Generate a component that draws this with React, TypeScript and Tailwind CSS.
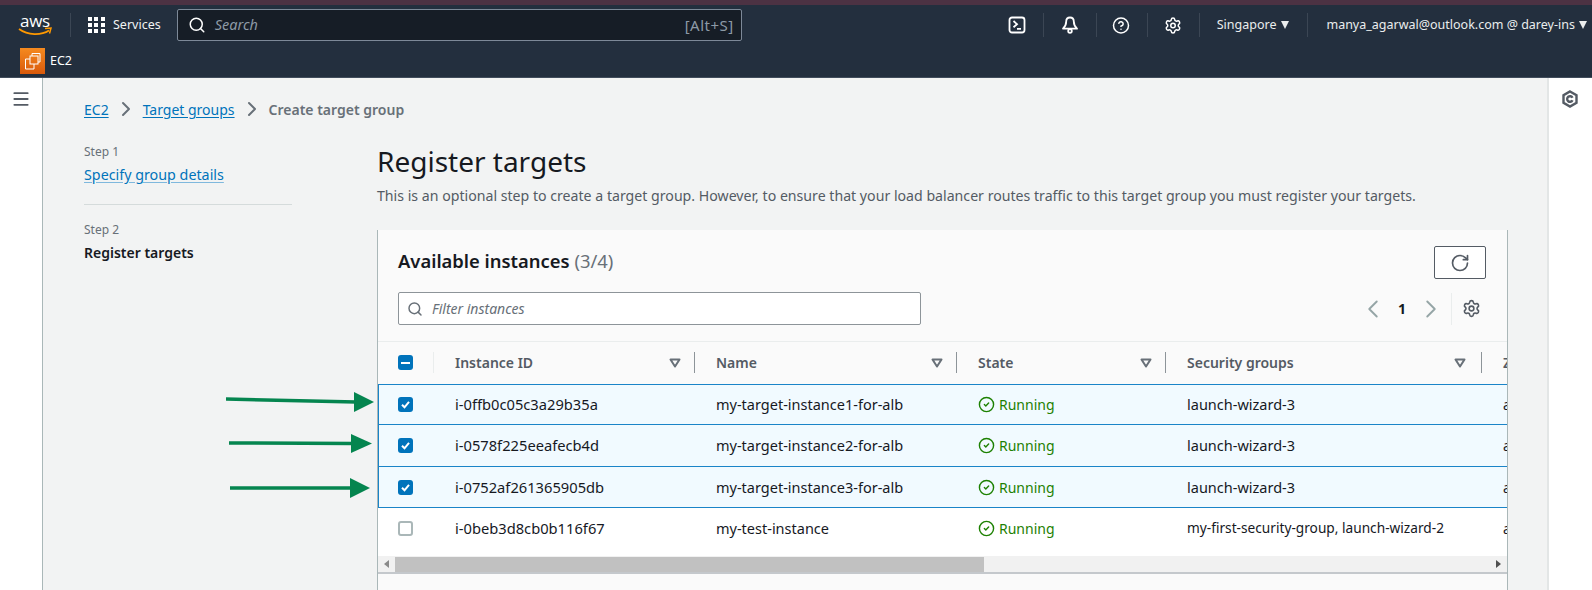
import React from 'react';
import { ChevronLeft, ChevronRight, RotateCw, Search, Settings, CircleHelp, Menu, CircleCheck } from 'lucide-react';

const rows = [
    { id: 'i-0ffb0c05c3a29b35a', name: 'my-target-instance1-for-alb', groups: 'launch-wizard-3', selected: true, h: 'h-[40px]' },
    { id: 'i-0578f225eeafecb4d', name: 'my-target-instance2-for-alb', groups: 'launch-wizard-3', selected: true, h: 'h-[42px]' },
    { id: 'i-0752af261365905db', name: 'my-target-instance3-for-alb', groups: 'launch-wizard-3', selected: true, h: 'h-[41px] pt-[1px]' },
    { id: 'i-0beb3d8cb0b116f67', name: 'my-test-instance', groups: 'my-first-security-group, launch-wizard-2', selected: false, h: 'h-[49px] pb-[7px]' },
];

const columnGrid = 'grid grid-cols-[56px_261px_262px_209px_316px_100px] w-[1204px]';

const NavDivider = () => <div className="w-px h-[24px] bg-[#3b4654]" />;

const NavCaret = () => (
    <div className="w-0 h-0 border-x-[4.500px] border-x-transparent border-t-[8px] border-t-[#eaeded]" />
);

const Triangle = () => (
    <svg width="12" height="10" viewBox="0 0 12 10" className="shrink-0">
        <path d="M1.500 1.500h9L6 8.500z" fill="none" stroke="#687078" strokeWidth="2" strokeLinejoin="round" />
    </svg>
);

const HeaderCell = ({ label, tight }: { label: string; tight?: boolean }) => (
    <div className={`flex items-center h-[21px] pl-[21px] border-r border-[#8d9499] justify-between ${tight ? 'pr-[13px]' : 'pr-[15px]'}`}>
        <span className="text-[14px] font-semibold text-[#545b64]">{label}</span>
        <Triangle />
    </div>
);

const Checkbox = ({ state }: { state: 'on' | 'off' | 'mixed' }) => {
    if (state === 'off') {
        return <div className="w-[15px] h-[15px] rounded-[3px] bg-white border-2 border-[#aab7b8]" />;
    }
    return (
        <div className="w-[15px] h-[15px] rounded-[3px] bg-[#0073bb] flex items-center justify-center">
            {state === 'on' ? (
                <svg width="11" height="11" viewBox="0 0 11 11">
                    <path d="M2 5.800 4.500 8.300 9 2.800" fill="none" stroke="white" strokeWidth="2" />
                </svg>
            ) : (
                <div className="w-[9px] h-[2px] bg-white" />
            )}
        </div>
    );
};

const Arrow = ({ className, shaft, head }: { className: string; shaft: string; head: string }) => (
    <svg width="150" height="24" viewBox="0 0 150 24" className={`absolute ${className}`}>
        <path d={shaft} stroke="#05854f" strokeWidth="3.500" fill="none" />
        <path d={head} fill="#05854f" />
    </svg>
);

const TerminalIcon = () => (
    <svg width="18" height="18" viewBox="0 0 18 18" fill="none" stroke="white" strokeWidth="1.800">
        <rect x="1.500" y="1.500" width="15" height="15" rx="2.500" />
        <path d="M5.500 5 9 8.200 5.500 11.200M9 12.800H13" />
    </svg>
);

const BellIcon = () => (
    <svg width="18" height="18" viewBox="0 0 18 18" fill="none" stroke="white" strokeWidth="1.800" strokeLinejoin="round">
        <path d="M9 1.500c-2.500 0-3.800 1.800-3.800 4 0 3-1 5-3.200 7.200h14c-2.200-2.200-3.200-4.200-3.200-7.200 0-2.200-1.300-4-3.800-4z" />
        <circle cx="9" cy="15" r="1.800" />
    </svg>
);

const AwsLogo = () => (
    <div className="flex flex-col items-center w-[34px] h-[24px] relative">
        <span className="text-[17px] leading-[15px] text-white font-['Open_Sans',sans-serif] tracking-[-0.3px]">aws</span>
        <svg width="34" height="11" viewBox="0 0 34 11" className="absolute left-0 top-[14px]">
            <path d="M1 2c9 6.500 22 6.500 30 1.500" fill="none" stroke="#ff9900" strokeWidth="1.800" />
            <path d="M27 1.500 33 1 31.500 6.500" fill="none" stroke="#ff9900" strokeWidth="1.500" />
        </svg>
    </div>
);

const Ec2Icon = () => (
    <div className="w-[25px] h-[26px] bg-gradient-to-b from-[#f58a1f] to-[#d9590b] flex items-center justify-center">
        <svg width="19" height="19" viewBox="0 0 19 19" fill="none" stroke="white" strokeWidth="1">
            <rect x="7" y="4" width="8" height="8" />
            <path d="M9 4V1.500H17V10H15M7 7H2.500V17H11V12" />
        </svg>
    </div>
);

export default function App() {
    return (
        <div className="w-[1592px] h-[590px] overflow-hidden relative bg-[#f2f3f3] font-['Noto_Sans',sans-serif] flex flex-col">
            <div className="h-[5px] bg-[#4c3243]" />

            {/* Top nav */}
            <div className="h-[40px] bg-[#232f3e] flex items-center pl-[18px] text-white">
                <AwsLogo />
                <div className="ml-[18px]"><NavDivider /></div>
                <div className="ml-[17px] grid grid-cols-3 gap-[2px] w-[17px]">
                    {[...Array(9)].map((_, i) => <div key={i} className="w-[4px] h-[4px] bg-white" />)}
                </div>
                <span className="ml-[8px] text-[12.500px] text-[#f2f3f3]">Services</span>
                <div className="ml-[16px] w-[565px] h-[32px] bg-[#161d26] border border-[#7d8998] rounded-[2px] flex items-center pl-[10px] pr-[7px]">
                    <Search size={18} strokeWidth={2} className="text-white" />
                    <span className="ml-[9px] text-[14.500px] italic text-[#8d9aa6]">Search</span>
                    <span className="ml-auto text-[15px] tracking-[0.5px] text-[#8d9aa6]">[Alt+S]</span>
                </div>
                <div className="ml-[266px] w-[18px] flex justify-center"><TerminalIcon /></div>
                <div className="ml-[17px]"><NavDivider /></div>
                <div className="ml-[17px] w-[18px] flex justify-center"><BellIcon /></div>
                <div className="ml-[17px]"><NavDivider /></div>
                <div className="ml-[15px] w-[18px] flex justify-center"><CircleHelp size={19} strokeWidth={2} /></div>
                <div className="ml-[17px]"><NavDivider /></div>
                <div className="ml-[16px] w-[18px] flex justify-center"><Settings size={19} strokeWidth={2} /></div>
                <div className="ml-[17px]"><NavDivider /></div>
                <span className="ml-[17px] text-[12.500px] text-[#eaeded]">Singapore</span>
                <div className="ml-[5px]"><NavCaret /></div>
                <div className="ml-[18px]"><NavDivider /></div>
                <span className="ml-[18px] text-[12.500px] text-[#eaeded] whitespace-nowrap">manya_agarwal@outlook.com @ darey-ins</span>
                <div className="ml-[4px]"><NavCaret /></div>
            </div>

            {/* Service bar */}
            <div className="h-[33px] bg-[#232f3e] border-b border-[#414d5c] flex items-center pl-[20px] text-white">
                <Ec2Icon />
                <span className="ml-[5px] text-[12.500px]">EC2</span>
            </div>

            <div className="flex-1 flex min-h-0">
                {/* Left rail */}
                <div className="w-[43px] bg-white border-r border-[#aab7b8] flex justify-center pt-[11px] shrink-0">
                    <Menu size={20} strokeWidth={2.200} className="text-[#545b64]" />
                </div>

                <div className="flex-1 min-w-0 pl-[41px] pt-[21px]">
                    {/* Breadcrumb */}
                    <div className="flex items-center text-[14px] h-[20px] whitespace-nowrap">
                        <a className="text-[#0073bb] underline underline-offset-2">EC2</a>
                        <ChevronRight size={24} strokeWidth={2} className="mx-[5px] text-[#687078]" />
                        <a className="text-[#0073bb] underline underline-offset-2">Target groups</a>
                        <ChevronRight size={24} strokeWidth={2} className="mx-[5px] text-[#687078]" />
                        <span className="font-semibold text-[#687078]">Create target group</span>
                    </div>

                    <div className="flex mt-[12px]">
                        {/* Steps */}
                        <div className="w-[208px] shrink-0 pt-[12px]">
                            <div className="text-[12px] leading-[18px] text-[#687078]">Step 1</div>
                            <a className="block mt-[4px] text-[14.300px] leading-[20px] text-[#0073bb] underline underline-offset-2 decoration-[#7fb8dd]">Specify group details</a>
                            <div className="mt-[19px] h-px bg-[#d5dbdb]" />
                            <div className="mt-[16px] text-[12px] leading-[18px] text-[#687078]">Step 2</div>
                            <div className="mt-[4px] text-[14px] leading-[20px] font-semibold text-[#16191f]">Register targets</div>
                        </div>

                        {/* Main */}
                        <div className="ml-[85px] w-[1131px] shrink-0">
                            <h1 className="text-[28px] leading-[36px] text-[#16191f] mt-[12px]">Register targets</h1>
                            <p className="mt-[7px] text-[14.150px] leading-[20px] text-[#545b64] whitespace-nowrap">This is an optional step to create a target group. However, to ensure that your load balancer routes traffic to this target group you must register your targets.</p>

                            <div className="mt-[24px] bg-[#fafafa] border-l border-r border-[#aab7b8] relative h-[400px] overflow-hidden">
                                <div className="h-[112px] border-b border-[#eaeded] relative pl-[20px] pr-[21px]">
                                    <div className="flex items-start justify-between pt-[16px]">
                                        <div className="text-[18.400px] leading-[30px] font-semibold text-[#16191f]">
                                            Available instances <span className="font-normal text-[#687078]">(3/4)</span>
                                        </div>
                                        <div className="w-[52px] h-[33px] bg-white border border-[#545b64] rounded-[2px] flex items-center justify-center">
                                            <RotateCw size={20} strokeWidth={2} className="text-[#545b64]" />
                                        </div>
                                    </div>
                                    <div className="flex items-center justify-between mt-[13px]">
                                        <div className="w-[523px] h-[33px] bg-white border border-[#8d9499] rounded-[2px] flex items-center pl-[8px]">
                                            <Search size={16} strokeWidth={2.200} className="text-[#687078]" />
                                            <span className="ml-[9px] text-[14px] italic text-[#687078]">Filter instances</span>
                                        </div>
                                        <div className="flex items-center mr-[5px]">
                                            <ChevronLeft size={30} strokeWidth={1.500} className="text-[#95a5a6]" />
                                            <span className="mx-[10px] text-[14px] font-bold text-[#16191f]">1</span>
                                            <ChevronRight size={30} strokeWidth={1.500} className="text-[#95a5a6]" />
                                            <div className="w-px h-[32px] bg-[#eaeded] ml-[5px] mr-[10px]" />
                                            <Settings size={19} strokeWidth={2} className="text-[#545b64]" />
                                        </div>
                                    </div>
                                </div>

                                {/* Table */}
                                <div className="overflow-hidden">
                                    <div className={`${columnGrid} h-[42px] items-start pt-[10px]`}>
                                        <div className="h-[21px] border-r border-[#eaeded] pl-[20px] flex items-center"><Checkbox state="mixed" /></div>
                                        <HeaderCell label="Instance ID" tight />
                                        <HeaderCell label="Name" tight />
                                        <HeaderCell label="State" tight />
                                        <HeaderCell label="Security groups" />
                                        <div className="pl-[21px] text-[14px] font-semibold text-[#545b64] whitespace-nowrap">Zone</div>
                                    </div>
                                    {rows.map((row) => (
                                        <div key={row.id} className={`${columnGrid} ${row.h} items-center text-[#16191f] border-t border-[#1a84c8] ${row.selected ? 'bg-[#f1faff] shadow-[inset_1px_0_0_#1a84c8]' : 'bg-white'}`}>
                                            <div className="pl-[20px] flex items-center"><Checkbox state={row.selected ? 'on' : 'off'} /></div>
                                            <div className="pl-[21px] text-[14.700px]">{row.id}</div>
                                            <div className="pl-[21px] text-[14.500px]">{row.name}</div>
                                            <div className="pl-[21px] flex items-center gap-[4px] text-[14px] text-[#1d8102]">
                                                <CircleCheck size={17} strokeWidth={2} />
                                                <span>Running</span>
                                            </div>
                                            <div className={`pl-[21px] whitespace-nowrap ${row.selected ? 'text-[14.500px]' : 'text-[13.700px]'}`}>{row.groups}</div>
                                            <div className="pl-[21px] text-[14px] whitespace-nowrap">ap-southeast-1</div>
                                        </div>
                                    ))}
                                </div>

                                {/* Scrollbar */}
                                <div className="h-[18px] bg-[#f1f1f1] border-b-2 border-[#c4c8cc] flex items-center">
                                    <div className="w-[17px] flex justify-center">
                                        <div className="w-0 h-0 border-y-[4px] border-y-transparent border-r-[5px] border-r-[#8a8a8a]" />
                                    </div>
                                    <div className="w-[589px] h-[15px] bg-[#c1c1c1]" />
                                    <div className="ml-auto w-[17px] flex justify-center">
                                        <div className="w-0 h-0 border-y-[4px] border-y-transparent border-l-[5px] border-l-[#505050]" />
                                    </div>
                                </div>
                            </div>
                        </div>
                    </div>
                </div>

                {/* Right rail */}
                <div className="w-[45px] bg-white border-l-2 border-[#e3e6e6] flex justify-center pt-[12px] pr-[2px] shrink-0">
                    <svg width="18" height="18" viewBox="0 0 18 18" fill="none" stroke="#545b64" strokeWidth="2.400">
                        <path d="M9 1.500 15.500 5.200V12.800L9 16.500 2.500 12.800V5.200z" />
                        <path d="M11.500 7.800A2.800 2.800 0 1 0 11.500 10.200" />
                    </svg>
                </div>
            </div>

            {/* Annotation arrows */}
            <Arrow className="left-[226px] top-[390px]" shaft="M0 9 130 12" head="M128 2 148 12 128 22z" />
            <Arrow className="left-[229px] top-[432px]" shaft="M0 11 124 11.500" head="M122 2 143 11.500 122 21z" />
            <Arrow className="left-[230px] top-[476px]" shaft="M0 12 122 12" head="M120 2 140 12 120 22z" />
        </div>
    );
}
